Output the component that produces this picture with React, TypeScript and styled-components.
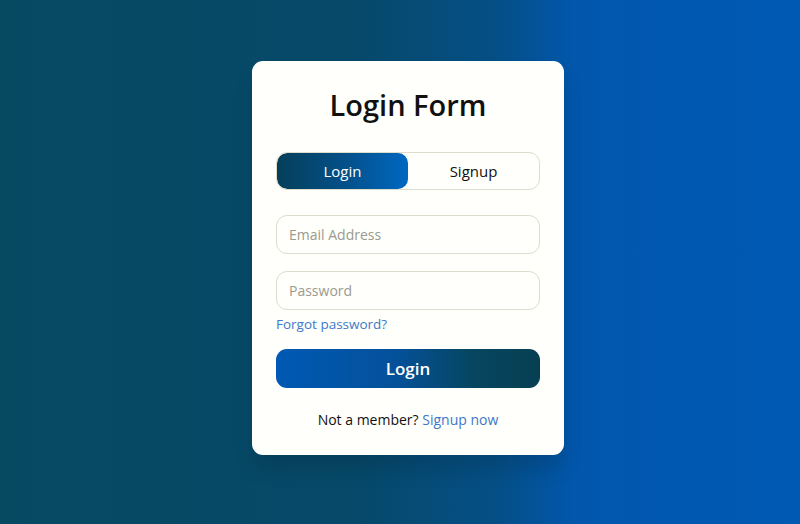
import styled, { createGlobalStyle } from 'styled-components';

const GlobalStyle = createGlobalStyle`
  * { box-sizing: border-box; }
  html, body { margin: 0; padding: 0; }
  body {
    font-family: 'Open Sans', 'Liberation Sans', sans-serif;
  }
`;

const Page = styled.div`
  width: 800px;
  height: 524px;
  display: flex;
  justify-content: center;
  align-items: flex-start;
  padding: 61px 0 0 16px;
  background: linear-gradient(to right, #064a62 0%, #06496a 45%, #054f86 62%, #0257ad 72%, #0059b3 100%);
`;

const Card = styled.div`
  width: 312px;
  height: 394px;
  background: #fffffb;
  border-radius: 11px;
  padding: 24px 24px 0;
  box-shadow: 0 15px 20px rgba(0, 0, 0, 0.12);
  display: flex;
  flex-direction: column;
`;

const Title = styled.h1`
  margin: 0;
  height: 40px;
  line-height: 40px;
  text-align: center;
  font-size: 29px;
  font-weight: 600;
  color: #111;
`;

const Toggle = styled.div`
  margin-top: 27px;
  height: 38px;
  display: flex;
  border: 1px solid #dedccb;
  border-radius: 11px;
  overflow: hidden;
`;

const ToggleBtn = styled.button<{ $active?: boolean }>`
  flex: 1;
  border: none;
  border-radius: 10px;
  font-family: inherit;
  font-size: 15px;
  font-weight: 500;
  cursor: pointer;
  color: ${(p) => (p.$active ? '#fff' : '#111')};
  background: ${(p) =>
    p.$active ? 'linear-gradient(to right, #053f5a, #04518c 55%, #0068c2)' : 'transparent'};
`;

const Field = styled.input<{ $gap: number }>`
  margin-top: ${(p) => p.$gap}px;
  height: 39px;
  width: 100%;
  border: 1px solid #dedccb;
  border-radius: 11px;
  padding: 0 12px;
  font-family: inherit;
  font-size: 14px;
  background: transparent;
  outline: none;
  &::placeholder { color: #9a9a8e; }
`;

const Link = styled.a`
  color: #3d78c9;
  text-decoration: none;
  cursor: pointer;
`;

const Forgot = styled.div`
  margin-top: 4px;
  height: 20px;
  line-height: 20px;
  font-size: 13.5px;
`;

const Submit = styled.button`
  margin-top: 15px;
  height: 39px;
  border: none;
  border-radius: 11px;
  font-family: inherit;
  font-size: 17px;
  font-weight: 600;
  color: #fff;
  cursor: pointer;
  background: linear-gradient(to right, #0059b3, #04519a 45%, #064660 75%, #073f52);
`;

const Footer = styled.div`
  margin-top: 22px;
  text-align: center;
  font-size: 14px;
  line-height: 20px;
  color: #111;
`;

export default function App() {
  return (
    <>
      <GlobalStyle />
      <Page>
        <Card>
          <Title>Login Form</Title>
          <Toggle>
            <ToggleBtn $active>Login</ToggleBtn>
            <ToggleBtn>Signup</ToggleBtn>
          </Toggle>
          <Field $gap={25} type="text" placeholder="Email Address" />
          <Field $gap={17} type="password" placeholder="Password" />
          <Forgot>
            <Link>Forgot password?</Link>
          </Forgot>
          <Submit>Login</Submit>
          <Footer>
            Not a member? <Link>Signup now</Link>
          </Footer>
        </Card>
      </Page>
    </>
  );
}
